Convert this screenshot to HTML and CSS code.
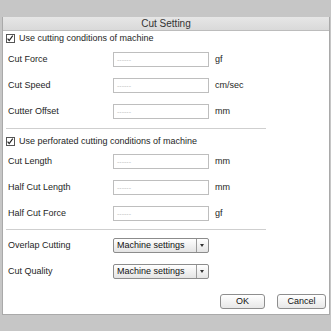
FILE: index.html
```html
<!DOCTYPE html>
<html lang="en">

<head>
    <meta charset="UTF-8">
    <title>Cut Setting</title>
    <link rel="stylesheet" href="styles.css">
</head>

<body>
    <div class="dialog">
        <div class="titlebar">Cut Setting</div>

        <div class="content">
            <div class="check-row">
                <span class="check">
                    <svg width="9" height="9" viewBox="0 0 9 9"><path d="M1.8 4.6 L3.6 6.8 L7.6 1.2" fill="none" stroke="#222" stroke-width="1.3"/></svg>
                </span>
                <span>Use cutting conditions of machine</span>
            </div>

            <div class="fields first">
                <div class="row">
                    <span class="label">Cut Force</span>
                    <span class="field">------</span>
                    <span class="unit">gf</span>
                </div>
                <div class="row">
                    <span class="label">Cut Speed</span>
                    <span class="field">------</span>
                    <span class="unit">cm/sec</span>
                </div>
                <div class="row">
                    <span class="label">Cutter Offset</span>
                    <span class="field">------</span>
                    <span class="unit">mm</span>
                </div>
            </div>

            <div class="sep sep-1"></div>

            <div class="check-row second">
                <span class="check">
                    <svg width="9" height="9" viewBox="0 0 9 9"><path d="M1.8 4.6 L3.6 6.8 L7.6 1.2" fill="none" stroke="#222" stroke-width="1.3"/></svg>
                </span>
                <span>Use perforated cutting conditions of machine</span>
            </div>

            <div class="fields">
                <div class="row">
                    <span class="label">Cut Length</span>
                    <span class="field">------</span>
                    <span class="unit">mm</span>
                </div>
                <div class="row">
                    <span class="label">Half Cut Length</span>
                    <span class="field">------</span>
                    <span class="unit">mm</span>
                </div>
                <div class="row">
                    <span class="label">Half Cut Force</span>
                    <span class="field">------</span>
                    <span class="unit">gf</span>
                </div>
            </div>

            <div class="sep sep-2"></div>

            <div class="fields selects">
                <div class="row">
                    <span class="label">Overlap Cutting</span>
                    <span class="select">
                        <span class="select-text">Machine settings</span>
                        <span class="select-arrow"></span>
                    </span>
                </div>
                <div class="row">
                    <span class="label">Cut Quality</span>
                    <span class="select">
                        <span class="select-text">Machine settings</span>
                        <span class="select-arrow"></span>
                    </span>
                </div>
            </div>

            <div class="buttons">
                <span class="btn btn-ok">OK</span>
                <span class="btn btn-cancel">Cancel</span>
            </div>
        </div>
    </div>
</body>

</html>
```

FILE: styles.css
```css
body {
    margin: 0;
    background-color: #c6c6c6;
    font-family: "Liberation Sans", Arial, Helvetica, sans-serif;
    font-size: 9px;
    color: #1e1e1e;
}

.dialog {
    margin: 17px 0 0 2px;
    width: 326px;
    height: 297px;
    border: 1px solid #a9a9a9;
    border-top: none;
    background-color: white;
}

.titlebar {
    height: 13px;
    line-height: 14px;
    text-align: center;
    font-size: 10px;
    color: #333;
    background: linear-gradient(#e6e6e6, #d9d9d9);
    border-bottom: 1px solid #bcbcbc;
}

.check-row {
    display: flex;
    align-items: center;
    height: 14px;
    padding-left: 3px;
}

.check {
    display: flex;
    width: 7px;
    height: 7px;
    border: 1px solid #555;
    margin-right: 4px;
    background-color: white;
    overflow: visible;
}

.check svg {
    margin: -1px 0 0 -1px;
}

.check-row.second {
    margin-top: 5px;
}

.fields.first {
    margin-top: 1px;
}

.row {
    display: flex;
    align-items: center;
    height: 26px;
    padding-left: 5px;
}

.label {
    width: 105px;
}

.field {
    box-sizing: border-box;
    width: 96px;
    height: 15px;
    border: 1px solid #bebebe;
    padding-left: 3px;
    font-size: 7px;
    line-height: 13px;
    color: #c2c2c2;
}

.unit {
    margin-left: 6px;
}

.sep {
    width: 260px;
    height: 1px;
    margin-left: 3px;
    background-color: #cfcfcf;
}

.sep-1 {
    margin-top: 4px;
}

.sep-2 {
    margin-top: 3px;
}

.selects {
    margin-top: 2px;
}

.select {
    box-sizing: border-box;
    display: flex;
    width: 96px;
    height: 15px;
    border: 1px solid #8c8c8c;
    border-radius: 2px;
    background: linear-gradient(#ffffff, #e4e4e4);
}

.select-text {
    flex: 1;
    padding-left: 3px;
    line-height: 13px;
    color: #111;
}

.select-arrow {
    width: 11px;
    border-left: 1px solid #9a9a9a;
    position: relative;
}

.select-arrow::after {
    content: "";
    position: absolute;
    left: 3px;
    top: 5px;
    border-left: 2.5px solid transparent;
    border-right: 2.5px solid transparent;
    border-top: 3px solid #333;
}

.buttons {
    display: flex;
    justify-content: flex-end;
    gap: 12px;
    margin-top: 10px;
    padding-right: 3px;
}

.btn {
    box-sizing: border-box;
    height: 15px;
    line-height: 13px;
    text-align: center;
    border: 1px solid #8e8e8e;
    border-radius: 3px;
    background: linear-gradient(#ffffff, #e8e8e8);
    color: #111;
}

.btn-ok {
    width: 45px;
}

.btn-cancel {
    width: 49px;
}
```
